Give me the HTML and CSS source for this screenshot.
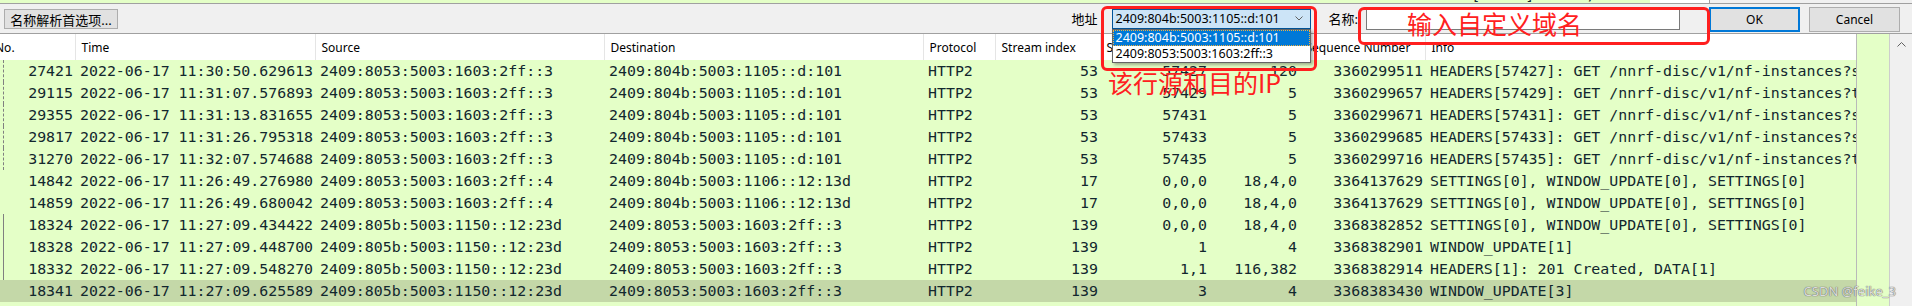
FILE: index.html
```html
<!DOCTYPE html>
<html>
<head>
	<meta charset="utf-8">
	<title>Wireshark - 名称解析</title>
	<link rel="stylesheet" href="styles.css">
</head>
<body>
	<div class="prev-row">
		<div class="prev-list"><div class="prev-text">27419 2022-06-17 11:30:50.612944 2409:8053:5003:1603:2ff::3    2409:804b:5003:1105::d:101   HTTP2                53      57425         5       3360299498 HEADERS[57425]: GET /nnrf-disc/v1/nf-instances?s</div></div>
		<div class="prev-scroll"></div>
	</div>

	<div class="toolbar">
		<button class="btn btn-prefs">名称解析首选项...</button>
		<div class="resolve-group">
			<label class="lbl lbl-addr">地址</label>
			<div class="combo">
				<span class="combo-text">2409:804b:5003:1105::d:101</span>
				<svg class="combo-arrow" viewBox="0 0 8 5"><path d="M0.5 0.5 L4 4 L7.5 0.5" /></svg>
				<ul class="combo-list">
					<li class="sel">2409:804b:5003:1105::d:101</li>
					<li>2409:8053:5003:1603:2ff::3</li>
				</ul>
			</div>
			<label class="lbl lbl-name">名称:</label>
			<input class="name-input" type="text">
			<button class="btn btn-ok">OK</button>
			<button class="btn btn-cancel">Cancel</button>
		</div>
	</div>

	<div class="packet-list">
		<div class="viewport">
			<table class="packets">
				<colgroup>
					<col style="width:75px"><col style="width:240px"><col style="width:289px"><col style="width:319px"><col style="width:72px">
					<col style="width:105px"><col style="width:109px"><col style="width:90px"><col style="width:126px"><col style="width:675px">
				</colgroup>
				<thead>
					<tr>
						<th class="col-no">No.</th>
						<th>Time</th>
						<th>Source</th>
						<th>Destination</th>
						<th>Protocol</th>
						<th>Stream index</th>
						<th>Stream ID</th>
						<th>Length</th>
						<th>Sequence Number</th>
						<th>Info</th>
					</tr>
				</thead>
				<tbody>
					<tr class="rel-dash">
						<td class="num">27421</td><td>2022-06-17 11:30:50.629613</td><td>2409:8053:5003:1603:2ff::3</td><td>2409:804b:5003:1105::d:101</td><td>HTTP2</td>
						<td class="num">53</td><td class="num">57427</td><td class="num">120</td><td class="num">3360299511</td><td>HEADERS[57427]: GET /nnrf-disc/v1/nf-instances?service-names=nudm-sdm&amp;target-nf-type=UDM</td>
					</tr>
					<tr class="rel-dash">
						<td class="num">29115</td><td>2022-06-17 11:31:07.576893</td><td>2409:8053:5003:1603:2ff::3</td><td>2409:804b:5003:1105::d:101</td><td>HTTP2</td>
						<td class="num">53</td><td class="num">57429</td><td class="num">5</td><td class="num">3360299657</td><td>HEADERS[57429]: GET /nnrf-disc/v1/nf-instances?target-nf-type=AUSF&amp;requester-nf-type=AMF</td>
					</tr>
					<tr class="rel-dash">
						<td class="num">29355</td><td>2022-06-17 11:31:13.831655</td><td>2409:8053:5003:1603:2ff::3</td><td>2409:804b:5003:1105::d:101</td><td>HTTP2</td>
						<td class="num">53</td><td class="num">57431</td><td class="num">5</td><td class="num">3360299671</td><td>HEADERS[57431]: GET /nnrf-disc/v1/nf-instances?service-names=nausf-auth</td>
					</tr>
					<tr class="rel-dash">
						<td class="num">29817</td><td>2022-06-17 11:31:26.795318</td><td>2409:8053:5003:1603:2ff::3</td><td>2409:804b:5003:1105::d:101</td><td>HTTP2</td>
						<td class="num">53</td><td class="num">57433</td><td class="num">5</td><td class="num">3360299685</td><td>HEADERS[57433]: GET /nnrf-disc/v1/nf-instances?service-names=nudm-uecm</td>
					</tr>
					<tr class="rel-dash">
						<td class="num">31270</td><td>2022-06-17 11:32:07.574688</td><td>2409:8053:5003:1603:2ff::3</td><td>2409:804b:5003:1105::d:101</td><td>HTTP2</td>
						<td class="num">53</td><td class="num">57435</td><td class="num">5</td><td class="num">3360299716</td><td>HEADERS[57435]: GET /nnrf-disc/v1/nf-instances?target-nf-type=SMF</td>
					</tr>
					<tr>
						<td class="num">14842</td><td>2022-06-17 11:26:49.276980</td><td>2409:8053:5003:1603:2ff::4</td><td>2409:804b:5003:1106::12:13d</td><td>HTTP2</td>
						<td class="num">17</td><td class="num">0,0,0</td><td class="num">18,4,0</td><td class="num">3364137629</td><td>SETTINGS[0], WINDOW_UPDATE[0], SETTINGS[0]</td>
					</tr>
					<tr>
						<td class="num">14859</td><td>2022-06-17 11:26:49.680042</td><td>2409:8053:5003:1603:2ff::4</td><td>2409:804b:5003:1106::12:13d</td><td>HTTP2</td>
						<td class="num">17</td><td class="num">0,0,0</td><td class="num">18,4,0</td><td class="num">3364137629</td><td>SETTINGS[0], WINDOW_UPDATE[0], SETTINGS[0]</td>
					</tr>
					<tr class="rel-line">
						<td class="num">18324</td><td>2022-06-17 11:27:09.434422</td><td>2409:805b:5003:1150::12:23d</td><td>2409:8053:5003:1603:2ff::3</td><td>HTTP2</td>
						<td class="num">139</td><td class="num">0,0,0</td><td class="num">18,4,0</td><td class="num">3368382852</td><td>SETTINGS[0], WINDOW_UPDATE[0], SETTINGS[0]</td>
					</tr>
					<tr class="rel-line">
						<td class="num">18328</td><td>2022-06-17 11:27:09.448700</td><td>2409:805b:5003:1150::12:23d</td><td>2409:8053:5003:1603:2ff::3</td><td>HTTP2</td>
						<td class="num">139</td><td class="num">1</td><td class="num">4</td><td class="num">3368382901</td><td>WINDOW_UPDATE[1]</td>
					</tr>
					<tr class="rel-line">
						<td class="num">18332</td><td>2022-06-17 11:27:09.548270</td><td>2409:805b:5003:1150::12:23d</td><td>2409:8053:5003:1603:2ff::3</td><td>HTTP2</td>
						<td class="num">139</td><td class="num">1,1</td><td class="num">116,382</td><td class="num">3368382914</td><td>HEADERS[1]: 201 Created, DATA[1]</td>
					</tr>
					<tr class="cur">
						<td class="num">18341</td><td>2022-06-17 11:27:09.625589</td><td>2409:805b:5003:1150::12:23d</td><td>2409:8053:5003:1603:2ff::3</td><td>HTTP2</td>
						<td class="num">139</td><td class="num">3</td><td class="num">4</td><td class="num">3368383430</td><td>WINDOW_UPDATE[3]</td>
					</tr>
				</tbody>
			</table>
		</div>
		<div class="minimap"></div>
		<div class="vscroll">
			<svg class="up-arrow" viewBox="0 0 9 5"><path d="M0.5 4.5 L4.5 0.5 L8.5 4.5" /></svg>
		</div>
	</div>

	<!-- red notes drawn over the screenshot -->
	<div class="mark mark-addr"></div>
	<div class="note note-addr">该行源和目的IP</div>
	<div class="mark mark-name"></div>
	<div class="note note-name">输入自定义域名</div>

	<div class="watermark">CSDN @feike_3</div>
</body>
</html>
```

FILE: styles.css
```css
body {
	margin: 0;
	width: 1912px;
	height: 306px;
	overflow: hidden;
	position: relative;
	font-family: "Noto Sans", "Noto Sans CJK SC", sans-serif;
	font-size: 13px;
	color: #000;
	background-color: #f0f0f0; /* window face */
}

/* tail of the list above */
.prev-row {
	display: flex;
	height: 3px;
	overflow: hidden;
	border-bottom: 1px solid #a0a0a0;
}
.prev-list {
	width: 1650px;
	overflow: hidden;
	background-color: #e4ffc7;
}
.prev-text {
	margin-top: -16px;
	padding-left: 28px;
	line-height: 22px;
	white-space: pre;
	font-family: "DejaVu Sans Mono", monospace;
	font-size: 14.9px;
	color: #12272e;
}
.prev-scroll {
	width: 59px;
	background-color: #fff;
	border-right: 1px solid #a0a0a0;
}

/* resolve toolbar */
.toolbar {
	display: flex;
	align-items: center;
	height: 29px;
	padding: 0 12px 0 4px;
	border-bottom: 1px solid #a0a0a0;
}
.btn {
	margin: 0;
	padding: 0;
	font-family: inherit;
	font-size: 12px;
	color: #000;
	background-color: #e1e1e1;
	border: 1px solid #adadad;
	border-radius: 0;
	box-sizing: border-box;
}
.btn-prefs {
	width: 114px;
	height: 20px;
	font-size: 13px;
}
.resolve-group {
	display: flex;
	align-items: center;
	margin-left: auto;
}
.lbl-addr {
	margin-right: 14px;
}
.lbl-name {
	margin-left: 18px;
	margin-right: 8px;
}
.combo {
	position: relative;
	display: flex;
	align-items: center;
	width: 199px;
	height: 20px;
	padding-left: 3px;
	box-sizing: border-box;
	border: 1px solid #005499;
	background-color: #cce4f7;
}
.combo-text {
	flex: 1;
	font-size: 12.5px;
}
.combo-arrow {
	width: 8px;
	height: 5px;
	margin-right: 7px;
}
.combo-arrow path, .up-arrow path {
	fill: none;
	stroke: #606060;
	stroke-width: 1;
}
.combo-list {
	position: absolute;
	top: 19px;
	left: -1px;
	width: 199px;
	height: 34px;
	margin: 0;
	padding: 0;
	list-style: none;
	box-sizing: border-box;
	border: 1px solid #646464;
	background-color: #fff;
	box-shadow: 2px 2px 3px rgba(0, 0, 0, 0.3);
	z-index: 2;
}
.combo-list li {
	height: 16px;
	line-height: 16px;
	padding-left: 3px;
	font-size: 12.5px;
}
.combo-list li.sel {
	color: #fff;
	background-color: #0078d7;
	outline: 1px dotted #f0b040;
	outline-offset: -1px;
}
.name-input {
	width: 314px;
	height: 23px;
	margin: 0;
	box-sizing: border-box;
	border: 1px solid #7a7a7a;
	background-color: #fff;
}
.btn-ok, .btn-cancel {
	width: 91px;
	height: 25px;
	margin-top: 2px;
}
.btn-ok {
	margin-left: 29px;
	border-color: #0078d7;
	box-shadow: inset 0 0 0 1px #0078d7;
}
.btn-cancel {
	margin-left: 9px;
}

/* packet list */
.packet-list {
	display: flex;
	height: 272px;
}
.viewport {
	width: 1856px;
	overflow: hidden;
	background-color: #e4ffc7;
}
.packets {
	width: 2100px;
	table-layout: fixed;
	border-collapse: collapse;
}
.packets th {
	height: 26px;
	padding: 0 0 0 6px;
	overflow: hidden;
	white-space: nowrap;
	text-align: left;
	font-weight: normal;
	font-size: 12px;
	background-color: #fff;
	border-right: 1px solid #e5e5e5;
}
.packets th.col-no {
	padding-left: 0;
	text-indent: -5px;
}
.packets td {
	height: 22px;
	padding: 0 3px 0 5px;
	overflow: hidden;
	white-space: pre;
	line-height: 22px;
	font-family: "DejaVu Sans Mono", monospace;
	font-size: 14.9px;
	color: #12272e;
}
.packets td.num {
	text-align: right;
	padding-right: 2px;
}
.packets tr.cur td {
	background-color: #c4d8a8;
}
.packets tr.rel-dash td:first-child, .packets tr.rel-line td:first-child {
	position: relative;
}
.packets tr.rel-dash td:first-child::before, .packets tr.rel-line td:first-child::before {
	content: "";
	position: absolute;
	left: 3px;
	top: 0;
	bottom: 0;
	border-left: 1px dashed #808080;
}
.packets tr.rel-line td:first-child::before {
	border-left-style: solid;
}
.minimap {
	width: 33px;
	box-sizing: border-box;
	border-left: 1px solid #b9b9b9;
	background-color: #e4ffc7;
}
.vscroll {
	flex: 1;
	display: flex;
	justify-content: center;
	align-items: flex-start;
	padding-top: 8px;
	border-left: 1px solid #cdcdcd;
	background-color: #f0f0f0;
}
.up-arrow {
	width: 9px;
	height: 5px;
}

/* annotations */
.mark {
	position: absolute;
	box-sizing: border-box;
	border: 3px solid #ff1f1f;
	border-radius: 6px;
	z-index: 3;
}
.mark-addr {
	left: 1101px;
	top: 6px;
	width: 216px;
	height: 65px;
}
.mark-name {
	left: 1358px;
	top: 7px;
	width: 352px;
	height: 38px;
}
.note {
	position: absolute;
	z-index: 3;
	white-space: nowrap;
	line-height: 1;
	font-family: "Noto Sans CJK SC", sans-serif;
	font-size: 25px;
	color: #ff2020;
}
.note-addr {
	left: 1108px;
	top: 70px;
}
.note-name {
	left: 1407px;
	top: 11px;
}
.watermark {
	position: absolute;
	right: 16px;
	bottom: 6px;
	font-size: 13px;
	color: #dcdcdc;
	text-shadow: 0 0 1px #6a6a6a, 0 0 1px #6a6a6a;
}
```
